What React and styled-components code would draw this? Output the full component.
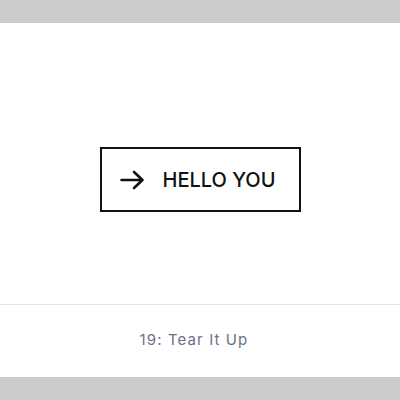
import React from "react";
import styled, { createGlobalStyle } from "styled-components";

const Global = createGlobalStyle`
  body {
    margin: 0;
    background: #cccccc;
    font-family: Inter, "Liberation Sans", sans-serif;
  }
`;

const Page = styled.div`
  width: 400px;
  height: 400px;
  padding: 23px 0;
  box-sizing: border-box;
`;

const Card = styled.div`
  background: #ffffff;
  height: 354px;
  display: flex;
  flex-direction: column;
`;

const Stage = styled.div`
  height: 282px;
  display: flex;
  align-items: center;
  justify-content: center;
  border-bottom: 1px solid #e3e3e3;
  box-sizing: border-box;
`;

const Button = styled.button`
  width: 201px;
  height: 65px;
  margin-top: 32px;
  box-sizing: border-box;
  border: 2px solid #111111;
  background: #ffffff;
  display: flex;
  align-items: center;
  padding: 0 0 0 18px;
  gap: 18px;
  font-family: Inter, "Liberation Sans", sans-serif;
  font-size: 20px;
  font-weight: 500;
  color: #111111;
  cursor: pointer;
`;

const Footer = styled.div`
  flex: 1;
  display: flex;
  align-items: center;
  justify-content: center;
  padding: 0 12px 4px 0;
  font-family: Inter, "Liberation Sans", sans-serif;
  font-size: 15px;
  letter-spacing: 1.1px;
  color: #6f6f86;
`;

const Arrow = () => (
  <svg width="25" height="20" viewBox="0 0 25 20" fill="none">
    <path
      d="M1.5 10h21M14 2l8.5 8-8.5 8"
      stroke="#111"
      strokeWidth="2.6"
      strokeLinecap="round"
      strokeLinejoin="round"
    />
  </svg>
);

export default function App() {
  return (
    <Page>
      <Global />
      <Card>
        <Stage>
          <Button>
            <Arrow />
            HELLO YOU
          </Button>
        </Stage>
        <Footer>19: Tear It Up</Footer>
      </Card>
    </Page>
  );
}
